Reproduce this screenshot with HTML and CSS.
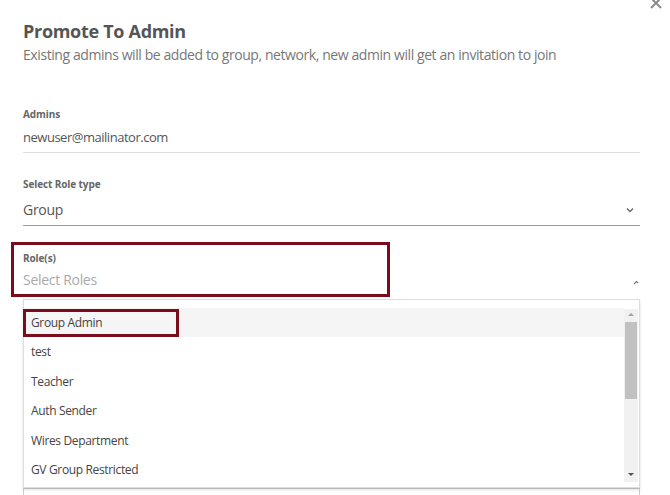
FILE: index.html
```html
<!DOCTYPE html>
<html lang="en">

<head>
    <title>Promote To Admin</title>
    <meta charset="UTF-8">
    <meta name="viewport" content="width=device-width, initial-scale=1">
    <link rel="stylesheet" href="styles.css">
</head>

<body>
    <div class="modal">
        <span class="close">
            <svg width="14" height="14" viewBox="0 0 14 14">
                <path d="M2 2 L12 12 M12 2 L2 12" stroke="#8a8a8a" stroke-width="2" fill="none" />
            </svg>
        </span>

        <h2 class="title">Promote To Admin</h2>
        <p class="subtitle">Existing admins will be added to group, network, new admin will get an invitation to join</p>

        <div class="field field-admins">
            <label>Admins</label>
            <div class="value">newuser@mailinator.com</div>
        </div>

        <div class="field field-type">
            <label>Select Role type</label>
            <div class="value select">
                <span>Group</span>
                <svg class="chev" width="8" height="6" viewBox="0 0 8 6">
                    <path d="M1 1.5 L4 4.5 L7 1.5" stroke="#666" stroke-width="1.3" fill="none" />
                </svg>
            </div>
        </div>

        <div class="field field-roles">
            <label>Role(s)</label>
            <div class="value select placeholder">
                <span>Select Roles</span>
                <svg class="caret" width="6" height="5" viewBox="0 0 6 5">
                    <path d="M1 4 L3.5 1.5 L5 3" stroke="#777" stroke-width="1.2" fill="none" />
                </svg>
            </div>
            <!-- highlight round the roles field -->
            <div class="mark mark-roles"></div>
        </div>

        <div class="dropdown">
            <ul class="options">
                <li class="active">Group Admin<span class="mark mark-option"></span></li>
                <li>test</li>
                <li>Teacher</li>
                <li>Auth Sender</li>
                <li>Wires Department</li>
                <li>GV Group Restricted</li>
            </ul>
            <div class="scrollbar">
                <span class="arrow up"></span>
                <span class="thumb"></span>
                <span class="arrow down"></span>
            </div>
        </div>
        <div class="dropdown-tail"></div>
    </div>
</body>

</html>
```

FILE: styles.css
```css
* {
    margin: 0;
    padding: 0;
    box-sizing: border-box;
}

body {
    background: #fff;
    font-family: "Open Sans", "Noto Sans", sans-serif;
    color: #555;
    overflow: hidden;
}

.modal {
    position: relative;
    width: 670px;
    height: 495px;
    padding: 19px 30px 0 23px;
}

.close {
    position: absolute;
    top: -7px;
    right: 7px;
}

.title {
    font-size: 18px;
    line-height: 24px;
    font-weight: 700;
    color: #555;
    letter-spacing: -0.3px;
}

.subtitle {
    margin-top: 2px;
    font-size: 14px;
    line-height: 20px;
    color: #777;
    letter-spacing: -0.42px;
}

.field {
    position: relative;
}

.field label {
    display: block;
    font-size: 10px;
    line-height: 14px;
    font-weight: 700;
    color: #666;
    letter-spacing: -0.1px;
}

.field .value {
    letter-spacing: -0.3px;
}

.field-admins {
    margin-top: 42px;
}

.field-admins .value {
    margin-top: 7px;
    font-size: 13px;
    line-height: 18px;
    padding-bottom: 6px;
    border-bottom: 1px solid #ddd;
    letter-spacing: -0.48px;
}

.field-type {
    margin-top: 24px;
}

.field-type .value {
    margin-top: 9px;
    font-size: 14px;
    line-height: 20px;
    padding-bottom: 5px;
    border-bottom: 1px solid #999;
}

.select {
    display: flex;
    justify-content: space-between;
    align-items: center;
}

.chev {
    margin-right: 6px;
}

.field-roles {
    margin-top: 25px;
}

.field-roles .value {
    margin-top: 5px;
    font-size: 14px;
    line-height: 20px;
}

.placeholder {
    color: #aaa;
}

.caret {
    margin-right: 1px;
    margin-top: 4px;
}

/* maroon outlines */
.mark {
    position: absolute;
    border: 3px solid #7a0c1b;
    pointer-events: none;
}

.mark-roles {
    top: -9px;
    left: -12px;
    width: 379px;
    height: 55px;
}

.dropdown {
    position: relative;
    margin-top: 9px;
    height: 189px;
    border: 1px solid #ddd;
    box-shadow: 0 2px 3px rgba(0, 0, 0, 0.12);
    padding: 8px 0 0 0;
}

.options {
    list-style: none;
    margin-right: 15px;
}

.options li {
    position: relative;
    height: 29.4px;
    line-height: 29.4px;
    padding-left: 7px;
    font-size: 12px;
    color: #444;
    letter-spacing: -0.35px;
}

.options li.active {
    background: #f5f5f5;
}

.mark-option {
    top: 1px;
    left: -1px;
    width: 156px;
    height: 28px;
}

.scrollbar {
    position: absolute;
    top: 9px;
    right: 1px;
    width: 14px;
    height: 173px;
    background: #f1f1f1;
    display: flex;
    flex-direction: column;
    align-items: center;
}

.arrow {
    width: 0;
    height: 0;
    border-left: 3px solid transparent;
    border-right: 3px solid transparent;
}

.arrow.up {
    margin-top: 4px;
    border-bottom: 3px solid #a3a3a3;
}

.arrow.down {
    margin-top: auto;
    margin-bottom: 6px;
    border-top: 3px solid #505050;
}

.thumb {
    margin-top: 6px;
    width: 12px;
    height: 77px;
    background: #c1c1c1;
}

.dropdown-tail {
    height: 20px;
    border: 1px solid #ccc;
    border-bottom: none;
}
```
